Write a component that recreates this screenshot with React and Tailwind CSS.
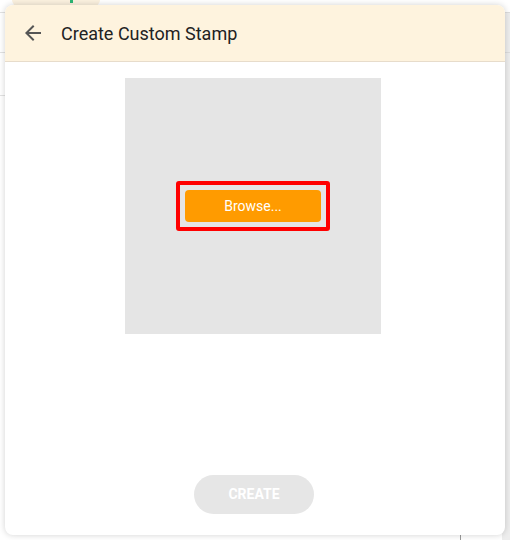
import React from "react";

const font = { fontFamily: "Roboto, 'Liberation Sans', sans-serif" };

function ArrowBack() {
  return (
    <svg width="24" height="24" viewBox="0 0 24 24" fill="#555555">
      <path d="M20 11H7.83l5.59-5.59L12 4l-8 8 8 8 1.41-1.41L7.83 13H20v-2z" />
    </svg>
  );
}

// page behind the dialog, mostly hidden
const Backdrop = () => (
  <div className="flex flex-col h-full">
    <div className="flex h-[12px]">
      <div className="ml-[12px] w-[88px] h-[6px] rounded-b-full bg-[#fbf1df] flex justify-center">
        <div className="ml-[30px] w-[3px] h-[3px] bg-[#2bb673]" />
      </div>
    </div>
    <div className="flex flex-1">
      <div className="flex-1 flex flex-col">
        <div className="h-[40px] border-t border-[#e2e2e2]" />
        <div className="h-[43px] border-t border-[#e2e2e2]" />
        <div className="flex-1 border-t border-[#e2e2e2] flex">
          <div className="ml-[460px] border-l border-[#999999]" />
        </div>
      </div>
      <div className="w-[8px] bg-[#ededed] flex flex-col">
        <div className="h-[40px] border-t border-[#dcdcdc]" />
        <div className="border-t border-[#dcdcdc]" />
      </div>
    </div>
  </div>
);

export default function App() {
  return (
    <div className="relative w-[510px] h-[540px] bg-white overflow-hidden" style={font}>
      <Backdrop />
      <div className="absolute left-[5px] top-[5px] w-[500px] h-[530px] bg-white rounded-lg shadow-[0_0_6px_rgba(0,0,0,0.18)] flex flex-col overflow-hidden">
        <div className="h-[57px] bg-[#fef3de] border-b border-[#e7dccb] flex items-center shrink-0">
          <div className="ml-[16px] w-[24px] h-[24px] flex items-center justify-center">
            <ArrowBack />
          </div>
          <div className="ml-[16px] text-[18px] text-[#222222] leading-none pt-[1px]">
            Create Custom Stamp
          </div>
        </div>
        <div className="flex-1 flex flex-col items-center">
          <div className="mt-[16px] mr-[4px] w-[256px] h-[256px] bg-[#e5e5e5] flex items-center justify-center">
            <div className="border-[4px] border-[#ff0000] rounded-[3px] p-[5px]">
              <button className="w-[136px] h-[32px] bg-[#ff9b00] rounded-[4px] text-white text-[14px]">
                Browse...
              </button>
            </div>
          </div>
          <button className="mt-auto mb-[21px] mr-[2px] w-[120px] h-[39px] rounded-full bg-[#e6e6e6] text-white text-[14px] font-bold">
            CREATE
          </button>
        </div>
      </div>
    </div>
  );
}
